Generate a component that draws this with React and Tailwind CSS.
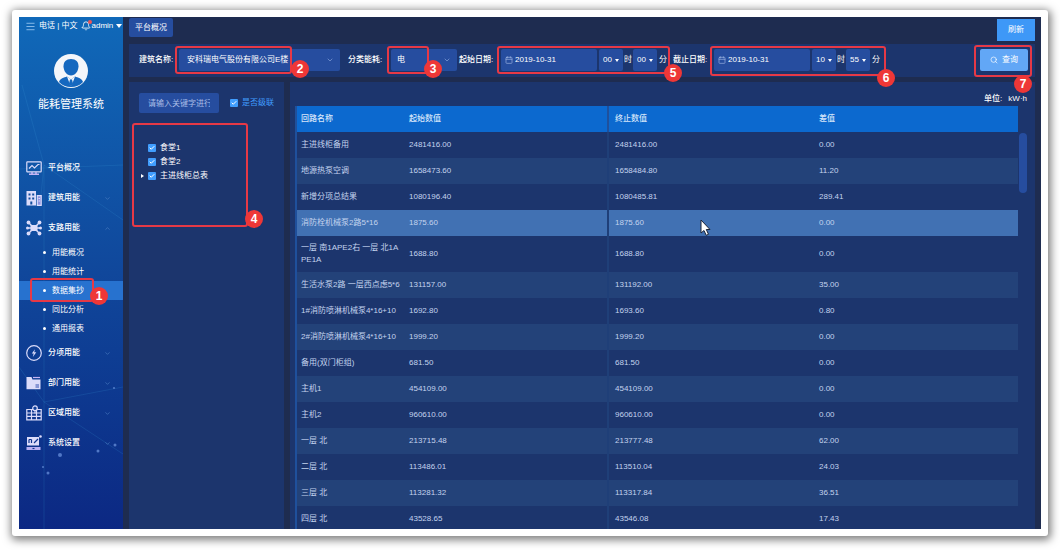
import { useState } from "react";
import { Bell, Calendar, Check, ChevronDown, ChevronUp, Menu, Search } from "lucide-react";

const menuTop = [
  { name: "平台概况", icon: "monitor" },
  { name: "建筑用能", icon: "building", arrow: "down" },
  { name: "支路用能", icon: "branch", arrow: "up" },
];

const menuSub = ["用能概况", "用能统计", "数据集抄", "同比分析", "通用报表"];

const menuBottom = [
  { name: "分项用能", icon: "bolt", arrow: "down" },
  { name: "部门用能", icon: "folder", arrow: "down" },
  { name: "区域用能", icon: "grid", arrow: "down" },
  { name: "系统设置", icon: "system", arrow: "down" },
];

const rows = [
  ["主进线柜备用", "2481416.00", "2481416.00", "0.00"],
  ["地源热泵空调", "1658473.60", "1658484.80", "11.20"],
  ["新增分项总结果", "1080196.40", "1080485.81", "289.41"],
  ["消防栓机械泵2路5*16", "1875.60", "1875.60", "0.00"],
  ["一层 南1APE2右 一层 北1A\nPE1A", "1688.80", "1688.80", "0.00"],
  ["生活水泵2路 一层西点虑5*6", "131157.00", "131192.00", "35.00"],
  ["1#消防喷淋机械泵4*16+10", "1692.80", "1693.60", "0.80"],
  ["2#消防喷淋机械泵4*16+10", "1999.20", "1999.20", "0.00"],
  ["备用(双门柜组)", "681.50", "681.50", "0.00"],
  ["主机1", "454109.00", "454109.00", "0.00"],
  ["主机2", "960610.00", "960610.00", "0.00"],
  ["一层 北", "213715.48", "213777.48", "62.00"],
  ["二层 北", "113486.01", "113510.04", "24.03"],
  ["三层 北", "113281.32", "113317.84", "36.51"],
  ["四层 北", "43528.65", "43546.08", "17.43"],
];

function MenuIcon({ type }) {
  const common = { width: 16, height: 16, viewBox: "0 0 16 16", fill: "none", stroke: "#dcdcfa", strokeWidth: 1.2 };
  if (type === "monitor") {
    return (
      <svg {...common}>
        <rect x="0.8" y="1.8" width="14.4" height="10" rx="0.6" />
        <path d="M3 8.5 6 5.5l2.5 2.5 3.5-3.5h1.5" />
        <path d="M3 14.3h10M6 12v2M10 12v2" stroke="#c4b5f5" strokeWidth="1.6" />
      </svg>
    );
  }
  if (type === "building") {
    return (
      <svg {...common}>
        <path d="M0.5 1h9.5v14.5H0.5z" fill="#dcdcfa" stroke="none" />
        <path d="M2.5 3.5h2v2h-2zM6.2 3.5h2v2h-2zM2.5 7.5h2v2h-2zM6.2 7.5h2v2h-2zM4.3 11.5h2v3h-2z" fill="#124d9f" stroke="none" />
        <path d="M11.3 5.700h3.900v9.600h-3.900z" fill="#8e93e0" />
        <path d="M12.5 8.5h1.5M12.5 11h1.5" />
      </svg>
    );
  }
  if (type === "branch") {
    return (
      <svg {...common}>
        <path d="M3 3l4 4M13 3 9 7M3 13l4-4M13 13 9 9M2 8h12" strokeWidth="1.4" />
        <rect x="4.5" y="5" width="7" height="6" fill="#dcdcfa" stroke="none" />
        <g fill="#dcdcfa" stroke="none">
          <circle cx="2.5" cy="2.5" r="1.9" />
          <circle cx="13.5" cy="2.5" r="1.9" />
          <circle cx="2.5" cy="13.5" r="1.9" />
          <circle cx="13.5" cy="13.5" r="1.9" />
          <circle cx="1.5" cy="8" r="1.5" />
          <circle cx="14.5" cy="8" r="1.5" />
        </g>
      </svg>
    );
  }
  if (type === "bolt") {
    return (
      <svg {...common}>
        <circle cx="8" cy="8" r="7.3" />
        <path d="M9 4.200 5.800 8.600h1.900l-.9 3.400 3.500-4.700H8.200z" fill="#dcdcfa" stroke="none" />
      </svg>
    );
  }
  if (type === "folder") {
    return (
      <svg {...common}>
        <path d="M.5 2h5l1 2.500h8v9.800H.5z" fill="#dcdcfa" stroke="none" />
        <path d="M7 2.500h7" stroke="#c4b5f5" />
        <path d="M9.500 10h3.500M9.500 12h3.500" stroke="#3450b0" />
      </svg>
    );
  }
  if (type === "grid") {
    return (
      <svg {...common}>
        <path d="M.8 4.500h14.400v10.300H.8zM.8 8h14.400M.8 11.400h14.400M5.500 4.500v10.300M10.500 4.500v10.300" />
        <circle cx="9" cy="3.2" r="2.3" fill="#10409a" />
        <path d="M9 5.500v3" />
      </svg>
    );
  }
  return (
    <svg {...common}>
      <path d="M1 2h12v8.500H1z" fill="#dcdcfa" stroke="none" />
      <path d="M3 4.500v3.500M5.500 4.500v3.500M3 4.500h2.500M8 8l4-4" stroke="#10358f" />
      <path d="M0.500 12h14v3H.5z" fill="#b9b0f2" stroke="none" />
      <path d="M6.500 13.500h2" stroke="#10358f" />
      <circle cx="14.5" cy="1.5" r="1.3" fill="#dcdcfa" stroke="none" />
    </svg>
  );
}

function MenuItem({ item }) {
  return (
    <li>
      <a href="#" className="flex h-[30px] items-center pl-[7px] pr-3">
        <MenuIcon type={item.icon} />
        <span className="ml-1.5 font-medium">{item.name}</span>
        {item.arrow === "down" && <ChevronDown size={7} className="ml-auto text-[#4f82c4]" />}
        {item.arrow === "up" && <ChevronUp size={7} className="ml-auto text-[#4f82c4]" />}
      </a>
    </li>
  );
}

// numbered red frame laid over a control
function Mark({ n, box, badge }) {
  return (
    <>
      <span className={"pointer-events-none absolute z-10 rounded-[3px] border-2 border-[#e63946] " + box}></span>
      <span
        className={
          "pointer-events-none absolute z-20 flex h-[18px] w-[18px] items-center justify-center rounded-full bg-[#ee3737] text-[12px] font-bold leading-none text-white " +
          badge
        }
      >
        {n}
      </span>
    </>
  );
}

function TimeSelect({ label, value }) {
  return (
    <span className="relative w-6">
      <select aria-label={label} defaultValue={value} className="h-[22px] w-full appearance-none rounded-[2px] bg-[#264d9f] pl-1">
        <option>{value}</option>
      </select>
      <span className="pointer-events-none absolute right-1 top-[10px] border-x-2 border-t-[3px] border-x-transparent border-t-white"></span>
    </span>
  );
}

function DateField({ id, hour, minute, children }) {
  return (
    <span className="relative flex items-center">
      <span className="relative w-24">
        <Calendar size={8} className="absolute left-1 top-[7px] text-[#9db4e2]" />
        <input id={id} defaultValue="2019-10-31" className="h-[22px] w-full rounded-[2px] bg-[#264d9f] pl-[14px]" />
      </span>
      <span className="w-[2px]"></span>
      <TimeSelect label="时" value={hour} />
      <span className="w-[10px] text-center">时</span>
      <TimeSelect label="分" value={minute} />
      <span className="w-[12px] text-center">分</span>
      {children}
    </span>
  );
}

function CheckBox({ id }) {
  return (
    <span className="relative h-2 w-2">
      <input id={id} type="checkbox" defaultChecked className="peer block h-2 w-2 appearance-none rounded-[1px] bg-[#1d3a77] checked:bg-[#409eff]" />
      <Check size={6} strokeWidth={4} className="pointer-events-none absolute left-px top-px hidden text-white peer-checked:block" />
    </span>
  );
}

function TreeNode({ id, name, open }) {
  return (
    <li className="flex h-[14px] items-center">
      <span className="w-[9px] pl-0.5">
        {open && <span className="block h-0 w-0 border-y-2 border-l-[3px] border-y-transparent border-l-white"></span>}
      </span>
      <CheckBox id={id} />
      <label htmlFor={id} className="ml-1 text-white">
        {name}
      </label>
    </li>
  );
}

function Sidebar() {
  return (
    <aside className="relative w-[104px] shrink-0 bg-linear-to-b from-[#1069b9] via-[#10479b] to-[#0c2883] text-white">
      <svg className="absolute inset-0 h-full w-full" viewBox="0 0 104 512" preserveAspectRatio="none" fill="none" stroke="#3f9bd8" strokeOpacity="0.18">
        <path d="M3 68 25 148 104 203M0 152l104-4M25 148v364M25 148l-4 40M0 350l25 35 79-15M25 385l79 52" />
        <g fill="#7fa6ee" fillOpacity="0.6" stroke="none">
          <circle cx="95" cy="371" r="1" />
          <circle cx="96" cy="428" r="1.5" />
          <circle cx="79" cy="434" r="1.5" />
          <circle cx="41" cy="438" r="2" />
          <circle cx="24" cy="450" r="1" />
          <circle cx="29" cy="456" r="1.5" />
        </g>
      </svg>
      <div className="relative">
        <div className="flex h-[18px] items-center pl-1.5 pr-px">
          <button aria-label="菜单">
            <Menu size={11} className="text-[#8fbfec]" />
          </button>
          <span className="ml-[3px] whitespace-nowrap">电话 | 中文</span>
          <span className="relative ml-[3px]">
            <Bell size={10} />
            <span className="absolute -right-px -top-px h-1 w-1 rounded-full bg-[#f05656]"></span>
          </span>
          <span className="ml-px">admin</span>
          <span className="ml-auto border-x-[3px] border-t-4 border-x-transparent border-t-white"></span>
        </div>
        <svg className="mx-auto mt-[19px]" width="34" height="34" viewBox="0 0 34 34">
          <circle cx="17" cy="17" r="17" fill="#f4f6fa" />
          <path d="M17 5c5 0 7.500 3 7.500 7.200 0 5-3.500 9.300-7.500 9.300s-7.500-4.300-7.500-9.300C9.500 8 12 5 17 5z" fill="#1568bf" />
          <path d="M5 28c1-3.500 5-4.500 8-5.500l4 3 4-3c3 1 7 2 8 5.500-3 3.300-7.300 5-12 5s-9-1.700-12-5z" fill="#1568bf" />
          <path d="M13 22.500 16.500 32 17 25.500zM21 22.500 17.500 32 17 25.500z" fill="#f4f6fa" />
          <path d="M16 25.500h2l1 4-2 3-2-3z" fill="#1568bf" />
        </svg>
        <h1 className="mt-2 text-center text-[11px] leading-4">能耗管理系统</h1>
        <ul className="mt-[41px]">
          {menuTop.map((item) => (
            <MenuItem key={item.name} item={item} />
          ))}
          {menuSub.map((name) => (
            <li key={name} className="relative">
              <a
                href="#"
                className={name === "数据集抄" ? "flex h-[19px] items-center bg-[#2772cf] pl-6" : "flex h-[19px] items-center pl-6"}
              >
                <span className="h-[3px] w-[3px] rounded-full bg-white"></span>
                <span className="ml-1.5">{name}</span>
              </a>
              {name === "数据集抄" && <Mark n={1} box="left-[11px] -top-[3px] h-6 w-16" badge="left-[71px] top-1.5" />}
            </li>
          ))}
          {menuBottom.map((item) => (
            <MenuItem key={item.name} item={item} />
          ))}
        </ul>
      </div>
    </aside>
  );
}

function FilterBar() {
  return (
    <form className="flex h-[33px] shrink-0 items-center bg-[#1c356d] pb-0.5 pl-[10px] pr-[7px] text-white" onSubmit={(e) => e.preventDefault()}>
      <label htmlFor="building" className="w-10 shrink-0 font-medium">
        建筑名称:
      </label>
      <span className="relative w-[161px]">
        <select id="building" className="h-[22px] w-full appearance-none rounded-[2px] bg-[#264d9f] pl-2 pr-4">
          <option>安科瑞电气股份有限公司E楼</option>
        </select>
        <ChevronDown size={8} className="pointer-events-none absolute right-1.5 top-[7px] text-[#8ba6dc]" />
        <Mark n={2} box="-left-1 -top-[3px] h-7 w-[117px]" badge="left-[112px] top-[11px]" />
      </span>
      <label htmlFor="energy" className="ml-2 w-[43px] shrink-0 font-medium">
        分类能耗:
      </label>
      <span className="relative w-[66px]">
        <select id="energy" className="h-[22px] w-full appearance-none rounded-[2px] bg-[#264d9f] pl-1.5">
          <option>电</option>
        </select>
        <ChevronDown size={8} className="pointer-events-none absolute right-1.5 top-[7px] text-[#8ba6dc]" />
        <Mark n={3} box="-left-1 -top-[3px] h-7 w-[42px]" badge="left-[33px] top-[11px]" />
      </span>
      <label htmlFor="start" className="ml-0.5 w-[42px] shrink-0 font-medium">
        起始日期:
      </label>
      <DateField id="start" hour="00" minute="00">
        <Mark n={5} box="-left-1 -top-[3px] h-7 w-[173px]" badge="left-[163px] top-[15px]" />
      </DateField>
      <label htmlFor="end" className="ml-1 w-[41px] shrink-0 font-medium">
        截止日期:
      </label>
      <DateField id="end" hour="10" minute="55">
        <Mark n={6} box="-left-1 -top-[3px] h-[30px] w-[176px]" badge="left-[163px] top-[20px]" />
      </DateField>
      <span className="relative ml-auto">
        <button className="flex h-[22px] w-12 items-center justify-center gap-1 rounded-[2px] bg-[#62a7f6]">
          <Search size={8} />
          查询
        </button>
        <Mark n={7} box="-left-1.5 -top-1 h-8 w-[58px]" badge="left-[34px] top-[26px]" />
      </span>
    </form>
  );
}

function DataTable() {
  const [active, setActive] = useState(3);

  return (
    <table className="w-full table-fixed border-collapse text-left text-[#c3d3ee]">
      <thead>
        <tr className="h-[26px] bg-[#0c69cf] text-[#d5e5fa]">
          <th className="w-[107px] border-l-2 border-[#1f509c] px-1 font-medium">回路名称</th>
          <th className="px-1.5 font-medium">起始数值</th>
          <th className="border-l-2 border-[#1f509c] px-1.5 font-medium">终止数值</th>
          <th className="px-1.5 font-medium">差值</th>
        </tr>
      </thead>
      <tbody>
        {rows.map((row, i) => {
          let bg = i % 2 ? "bg-[#234279]" : "bg-[#1c356d]";
          if (i === active) bg = "bg-[#4171b3]";
          return (
            <tr key={row[0]} className={"h-[26px] " + bg} onClick={() => setActive(i)}>
              <td className="whitespace-pre border-l-2 border-[#1f509c] px-1 py-1.5">{row[0]}</td>
              <td className="px-1.5">{row[1]}</td>
              <td className="relative border-l-2 border-[#1f3f78] px-1.5">
                {row[2]}
                {i === 3 && (
                  <svg className="absolute left-[91px] top-[9px]" width="11" height="18" viewBox="0 0 11 18">
                    <path d="M1 1v13l3-2.500 2.200 4.800 2.300-1-2.200-4.800H10z" fill="#fff" stroke="#1b2438" />
                  </svg>
                )}
              </td>
              <td className="px-1.5">{row[3]}</td>
            </tr>
          );
        })}
      </tbody>
    </table>
  );
}

export default function App() {
  return (
    <div className="flex h-screen bg-white px-3 pb-[14px] pt-[10px] font-['Liberation_Sans','Noto_Sans_CJK_SC',sans-serif] text-[8px] leading-[12px]">
      <div className="flex min-w-0 flex-1 rounded-[3px] bg-white p-[7px] shadow-[1px_2px_8px_2px_rgba(0,0,0,0.5)]">
        <div className="flex min-w-0 flex-1 overflow-hidden">
          <Sidebar />
          <main className="flex min-w-0 flex-1 flex-col bg-[#1e2c50] px-1.5">
            <header className="flex h-[27px] shrink-0 items-start justify-between">
              <button className="mt-px h-[19px] w-11 rounded-[2px] bg-[#264d9f] text-white">平台概况</button>
              <button className="mt-0.5 h-[22px] w-[38px] bg-[#3e98f7] text-white">刷新</button>
            </header>
            <FilterBar />
            <div className="mt-[5px] flex min-h-0 flex-1 gap-1.5">
              <section className="w-[155px] shrink-0 bg-[#1c356d] pl-[10px] pt-[11px]">
                <div className="flex items-center">
                  <input
                    aria-label="关键字"
                    placeholder="请输入关键字进行过滤"
                    className="h-5 w-20 rounded-[2px] bg-[#264d9f] px-[9px] text-white placeholder:text-[#a9bde6]"
                  />
                  <span className="ml-[11px] flex">
                    <CheckBox id="cascade" />
                  </span>
                  <label htmlFor="cascade" className="ml-1 text-[#409eff]">
                    是否级联
                  </label>
                </div>
                <div className="relative mt-7">
                  <ul>
                    <TreeNode id="node1" name="食堂1" />
                    <TreeNode id="node2" name="食堂2" />
                    <TreeNode id="node3" name="主进线柜总表" open />
                  </ul>
                  <Mark n={4} box="-left-[7px] -top-[18px] h-[104px] w-[116px]" badge="left-[106px] top-[69px]" />
                </div>
              </section>
              <section className="flex min-w-0 flex-1 flex-col overflow-hidden bg-[#1c356d] pl-[5px] pr-2 pt-[11px]">
                <div className="flex h-[13px] shrink-0 justify-end gap-1.5 text-white">
                  <span className="font-medium">单位:</span>
                  <span>kW·h</span>
                </div>
                <div className="flex min-h-0 flex-1">
                  <div className="min-w-0 flex-1 overflow-hidden">
                    <DataTable />
                  </div>
                  <div className="ml-px mt-[27px] h-[60px] w-2 rounded-full bg-[#264d9f]"></div>
                </div>
              </section>
            </div>
          </main>
        </div>
      </div>
    </div>
  );
}
